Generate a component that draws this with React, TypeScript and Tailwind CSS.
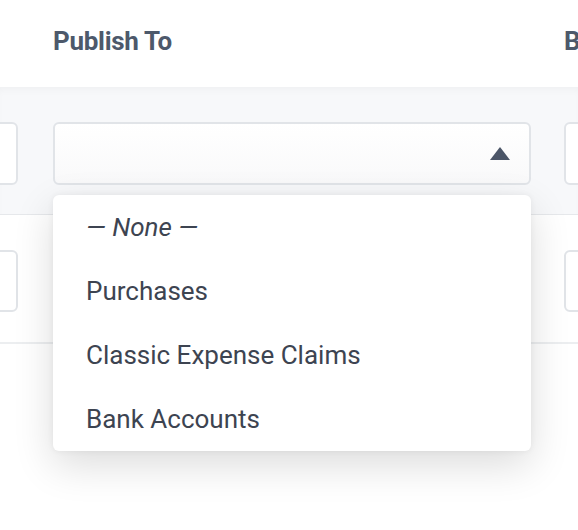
import { useState } from "react";

const OPTIONS = [
  { label: "— None —", none: true },
  { label: "Purchases" },
  { label: "Classic Expense Claims" },
  { label: "Bank Accounts" },
];

const SideBox = () => (
  <div className="h-full w-[478px] shrink-0 rounded-md border-2 border-[#e1e4e8] bg-white" />
);

export default function App() {
  const [value, setValue] = useState<string | null>(null);
  const [open, setOpen] = useState(true);

  return (
    <div
      className="relative h-[530px] w-[578px] overflow-hidden bg-white"
      style={{ fontFamily: "Roboto, 'Liberation Sans', sans-serif" }}
    >
      {/* header */}
      <div className="flex h-[87px] items-start pl-[53px] pt-[22px] text-[26px] font-bold tracking-[-0.3px] text-[#4d596b]">
        <div className="w-[511px] shrink-0">Publish To</div>
        <div className="shrink-0">Bank</div>
      </div>

      {/* row 1 */}
      <div className="flex h-[128px] border-b border-[#e6e8eb] bg-[#f7f8fa] pb-[29px] pt-[35px] shadow-[inset_0_6px_8px_-4px_rgba(0,0,0,0.04)]">
        <div className="ml-[-460px] flex">
          <SideBox />
          <button
            onClick={() => setOpen((prev) => !prev)}
            className="ml-[35px] mr-[33px] flex h-full w-[478px] shrink-0 items-center justify-end rounded-md border-2 border-[#e1e4e8] bg-gradient-to-b from-white to-[#f9f9fa] pr-[19px]"
          >
            <span className="mr-auto pl-[32px] text-[26px] text-[#3d4451]">{value}</span>
            <svg width="20" height="13" viewBox="0 0 20 13">
              <polygon points="10,0 20,13 0,13" fill="#4b5567" />
            </svg>
          </button>
          <SideBox />
        </div>
      </div>

      {/* row 2 */}
      <div className="flex h-[129px] border-b-2 border-[#eceef0] bg-white pb-[30px] pt-[35px]">
        <div className="ml-[-460px] flex">
          <SideBox />
          <div className="ml-[35px] mr-[33px] h-full w-[478px] shrink-0" />
          <SideBox />
        </div>
      </div>

      {/* dropdown menu */}
      {open && (
        <ul className="absolute left-[53px] top-[195px] w-[478px] rounded-md bg-white shadow-[0_14px_40px_rgba(0,0,0,0.14),0_0_6px_rgba(0,0,0,0.06)]">
          {OPTIONS.map((option) => (
            <li
              key={option.label}
              onClick={() => {
                setValue(option.none ? null : option.label);
                setOpen(false);
              }}
              className={
                option.none
                  ? "flex h-[64px] cursor-pointer items-center pl-[33px] text-[26px] italic text-[#3d4451]"
                  : "flex h-[64px] cursor-pointer items-center pl-[33px] text-[26px] text-[#3d4451]"
              }
            >
              {option.label}
            </li>
          ))}
        </ul>
      )}
    </div>
  );
}
